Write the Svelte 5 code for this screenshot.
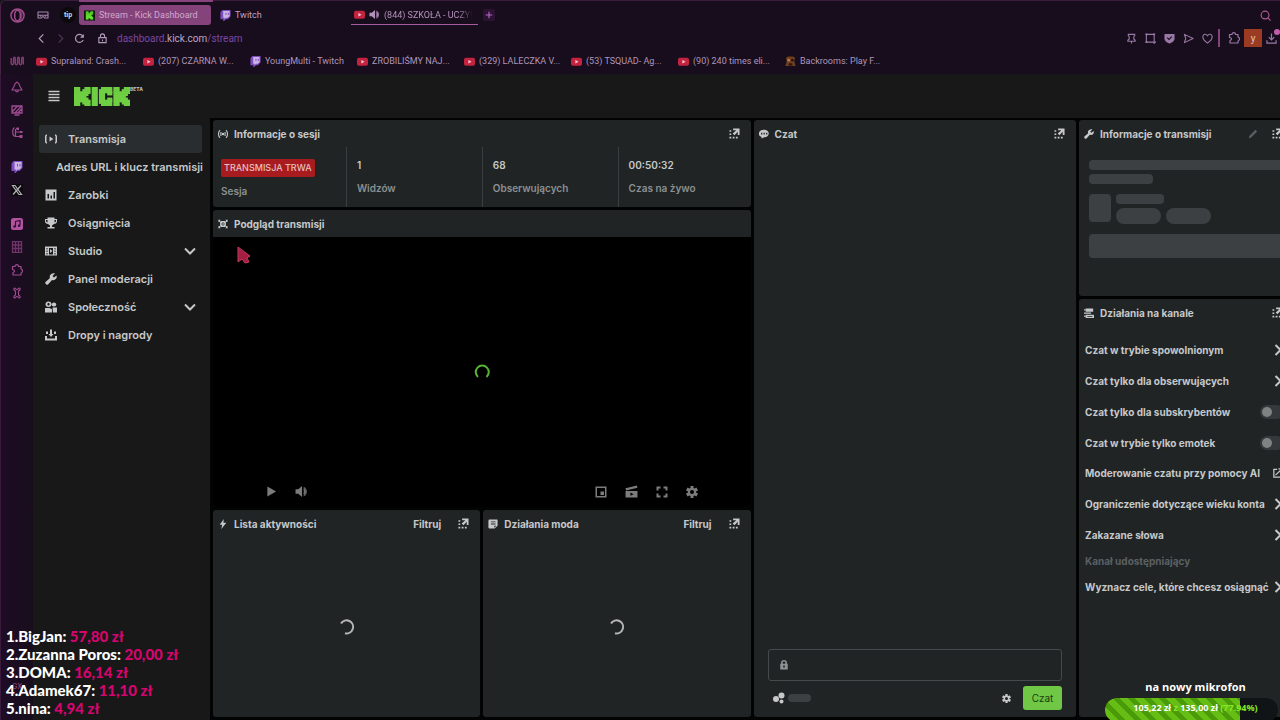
<script>
  const icons = {
    opera: '<g fill="none" stroke="currentColor" stroke-width="2.4"><circle cx="12" cy="12" r="10.5"/><ellipse cx="12" cy="12" rx="4.6" ry="8.6"/><path d="M12 3.4c9 1 9 16 0 17.200" opacity=".7"/></g>',
    workspace: '<path d="M2 6h20v12h-7l-1.500-2.500h-3L9 18H2zM3 12.500h18" fill="none" stroke="currentColor" stroke-width="2.200" stroke-linejoin="round"/><circle cx="7" cy="14" r="1.500"/><circle cx="17" cy="14" r="1.500"/>',
    back: '<path d="M16 3 7 12l9 9" fill="none" stroke="currentColor" stroke-width="2.600"/>',
    forward: '<path d="m8 3 9 9-9 9" fill="none" stroke="currentColor" stroke-width="2.600"/>',
    reload: '<path d="M20 15.500A8.800 8.800 0 1 1 19.500 7" fill="none" stroke="currentColor" stroke-width="2.600"/><path d="M21.500 2v8.500H13z"/>',
    padlock: '<path d="M4 10h16v11H4zM7.500 10V6.500a4.500 4.500 0 0 1 9 0V10M12 14v4" fill="none" stroke="currentColor" stroke-width="2.400"/>',
    youtube: '<rect x="0" y="4" width="24" height="17" rx="4" fill="#c3233f"/><path d="m9.500 8.500 7 4-7 4z" fill="#f0c9d4"/>',
    twitch: '<path d="M5 0h18v14l-6 6h-4l-4 4H7v-4H1V5z" fill="#7d4cc0"/><path d="M7 2h14v11l-4 4h-4l-3 3v-3H7z" fill="#c9b4e4"/><path d="M12 6h2v5h-2zM17 6h2v5h-2z" fill="#7d4cc0"/>',
    sound: '<path d="M1 8h5l7-6v20l-7-6H1z"/><path d="M16 3c8 3 8 15 0 18z" opacity=".75"/><path d="M16 8c3 2 3 6 0 8" fill="none" stroke="currentColor" stroke-width="2"/>',
    plus: '<path d="M12 2v20M2 12h20" fill="none" stroke="currentColor" stroke-width="3.500"/>',
    search: '<g fill="none" stroke="currentColor" stroke-width="2.500"><circle cx="11" cy="11" r="8.500"/><path d="m17 17 6 6"/></g>',
    pin: '<path d="M5 3h14v3l-2 2v5l3 3v2H4v-2l3-3V8L5 6zM12 18v5" fill="none" stroke="currentColor" stroke-width="2.400"/>',
    snapshot: '<path d="M3 3h17v17H3zM20 20h4M20 20v4" fill="none" stroke="currentColor" stroke-width="2.400"/><path d="M1 1h4v4H1zM18 1h4v4h-4zM1 18h4v4H1z"/>',
    shield: '<path d="M1 2h22v10c0 6-6 9-11 11C7 21 1 18 1 12z"/><path d="m7 10 4 4 6-6" fill="none" stroke="#180d1c" stroke-width="2.400"/>',
    send: '<path d="m3 3 19 9-19 9 3-9z" fill="none" stroke="currentColor" stroke-width="2.400" stroke-linejoin="round"/>',
    heart: '<path d="M12 22C2 15 1 11 2 7c1-5 7-6 10-1 3-5 9-4 10 1 1 4 0 8-10 15z" fill="none" stroke="currentColor" stroke-width="2.400"/>',
    puzzle: '<path d="M3 5h5c0-5 7-5 7 0h5v5c4 1 4 7 0 8v4H4v-5c4-1 4-6-1-6z" fill="none" stroke="currentColor" stroke-width="2.400" stroke-linejoin="round"/>',
    download: '<path d="M12 1v14M6 9l6 6 6-6M2 16v6h20v-6" fill="none" stroke="currentColor" stroke-width="2.600"/>',
    wave: '<path d="M2 7v9c0 3 4 3 4 0V8c0-3 3-3 3 0v8c0 3 4 3 4 0V8c0-3 3-3 3 0v8c0 3 4 3 4 0V8c0-3 3-3 3 0v10" fill="none" stroke="currentColor" stroke-width="2.600"/>',
    bell: '<path d="M12 2c4 2 5 5 6 9l4 7H2l4-7c1-4 2-7 6-9zM9 18c0 5 6 5 6 0" fill="none" stroke="currentColor" stroke-width="2.200" stroke-linejoin="round"/>',
    screen: '<path d="M2 4h20v14H2zM7 22h10M3 15 13 4M8 18 20 5M14 18l7-8" fill="none" stroke="currentColor" stroke-width="2.600"/>',
    branch: '<path d="M7 1C2 4 2 15 7 19M9 4v15h10M9 10h10M14 3h-4" fill="none" stroke="currentColor" stroke-width="2.400"/><path d="M11 1h5v5h-5zM18 8h5v4h-5zM17 16h6v6h-6z"/>',
    xlogo: '<rect width="24" height="24" fill="#0c0a0d"/><path d="M3 3h5l13 18h-5zM20 3 4 21" fill="none" stroke="currentColor" stroke-width="2.400"/>',
    music: '<rect width="24" height="24" rx="5"/><path d="M9 17V7l9-2v10" fill="none" stroke="#2a1230" stroke-width="2.400"/><circle cx="7" cy="17" r="2.500" fill="#2a1230"/><circle cx="16" cy="15.500" r="2.500" fill="#2a1230"/>',
    grid: '<path d="M3 1h18v22H3zM3 8h18M3 15h18M9 1v22M15 1v22" fill="none" stroke="currentColor" stroke-width="2.600"/>',
    bone: '<path d="M7 2c2 0 2 3 5 3s3-3 5-3 2 5-2 6v8c4 1 4 6 2 6s-2-3-5-3-3 3-5 3-2-5 2-6V8C5 7 5 2 7 2z" fill="none" stroke="currentColor" stroke-width="2.200"/>',
    menu: '<path d="M1 3h22M1 9h22M1 15h22M1 21h22" fill="none" stroke="currentColor" stroke-width="3"/>',
    live: '<path d="m9 7 8 5-8 5zM4 3v3H3v12h1v3H2l-2-3V6l2-3zM20 3v3h1v12h-1v3h2l2-3V6l-2-3z"/>',
    chart: '<path fill-rule="evenodd" d="M1 1h22v22H1zM5 10v9h3v-9zM11 13v6h3v-6zM17 6v13h3V6z"/>',
    trophy: '<path d="M5 1h14v3h5v5c0 3-3 5-6 5l-4 3v3h5v3H5v-3h5v-3l-4-3c-3 0-6-2-6-5V4h5zM2 6v3l3 2V6zM19 6v5l3-2V6z" fill-rule="evenodd"/>',
    studio: '<path fill-rule="evenodd" d="M0 3h24v18H0zM3 6v3h2V6zM3 11v3h2v-3zM3 16v3h2v-3zM19 6v3h2V6zM19 11v3h2v-3zM19 16v3h2v-3zM8 6v13h8V6zM10 8l5 4-5 4z"/>',
    wrench: '<path d="M20 1 15 6l3 3 5-4c2 5-2 11-9 9l-8 9c-3 2-7-2-5-5l9-8C7 5 14-1 20 1z"/>',
    people: '<path fill-rule="evenodd" d="M7 1c8 0 8 11 0 11S-1 1 7 1zM7 4c-3 0-3 5 0 5s3-5 0-5zM18 3c6 0 6 8 0 8s-6-8 0-8zM0 14h11v2h3v7H0zM15 13h9v10h-8z"/>',
    drops: '<path d="M0 14h4v5h16v-5h4v9H0zM10 1h4v9h3l-5 6-5-6h3zM2 5h4v5H2zM18 5h4v5h-4z"/>',
    down: '<path d="m2 7 10 10L22 7" fill="none" stroke="currentColor" stroke-width="4"/>',
    right: '<path d="m7 2 10 10L7 22" fill="none" stroke="currentColor" stroke-width="4"/>',
    signal: '<path d="M5 3C0 6 0 18 5 21M19 3c5 3 5 15 0 18M7 7v10M17 7v10" fill="none" stroke="currentColor" stroke-width="2.600"/><circle cx="12" cy="12" r="3"/>',
    popout: '<path d="M9 1h14v14h-4V8l-7 8-4-4 8-7H9zM1 5h4v3H1zM1 12h4v3H1zM1 19h4v4H1zM8 19h4v4H8zM15 19h4v4h-4z"/>',
    preview: '<path d="M1 2h5L4 7H1zM18 2h5v5h-3zM1 17h3l2 5H1zM20 17h3v5h-5z"/><rect x="5" y="5" width="14" height="14" rx="3"/><circle cx="12" cy="12" r="3" fill="none" stroke="#202425" stroke-width="1.600"/>',
    chat: '<path fill-rule="evenodd" d="M12 2c15 0 15 17 1 18l-7 3v-4C-5 15-1 2 12 2zM5 9v4h3V9zM11 9v4h3V9zM17 9v4h3V9z"/>',
    pencil: '<path d="M3 17 18 2l4 4L7 21l-5 1z"/>',
    actions: '<path d="M4 1h18v8H4zM0 11h17v3H0zM4 16h20v8H4z"/><path d="M0 3h4v3H0zM0 18h4v3H0z"/><path d="M8 19h12v2H8z" fill="#202425"/>',
    bolt: '<path d="M14 0 4 14h6L8 24l12-15h-7z"/>',
    note: '<path fill-rule="evenodd" d="M5 1h16c2 0 2 0 2 3v12l-7 7H5c-3 0-4-1-4-4V5c0-3 1-4 4-4zM7 6v2h11V6zM7 11v2h11v-2zM15 16v5l5-5z"/>',
    play: '<path d="M3 1 22 12 3 23z"/>',
    theater: '<path fill-rule="evenodd" d="M1 1h22v22H1zM4 4v16h16V4z"/><path d="M11 11h7v7h-7z"/>',
    clip: '<path d="m1 6 21-5 1 4L2 10zM1 11h22v12H1z"/><path d="m10 14 6 3-6 3z" fill="#000"/>',
    fullscreen: '<path d="M1 1h8v4H5v4H1zM15 1h8v8h-4V5h-4zM1 15h4v4h4v4H1zM19 15h4v8h-8v-4h4z"/>',
    gear: '<path fill-rule="evenodd" d="M9 0h6v4l2 1 4-2 3 6-4 2v2l4 2-3 6-4-2-2 1v4H9v-4l-2-1-4 2-3-6 4-2v-2L0 9l3-6 4 2 2-1zM12 8a4 4 0 1 0 0 8 4 4 0 0 0 0-8z"/>',
    lock: '<path fill-rule="evenodd" d="M3 9h2V6c0-8 14-8 14 0v3h2v14H3zM9 9h6V6c0-3-6-3-6 0zM10 13v5h4v-5z"/>',
    blobs: '<circle cx="6" cy="14" r="6"/><circle cx="17" cy="7" r="6"/><circle cx="17" cy="19" r="4"/>',
    external: '<path d="M10 3H2v19h19v-8M6 17 20 4M13 2h9v9" fill="none" stroke="currentColor" stroke-width="3"/>',
    bear: '<path d="M2 4l5-3h10l5 3-2 7 3 11H1l3-11z" fill="#70401f"/><circle cx="8" cy="9" r="3" fill="#c07a45"/><circle cx="16" cy="9" r="3" fill="#251612"/><path d="M8 16h8v5H8z" fill="#2a1714"/>'
  };
  const bookmarks = [
    ['youtube', 'Supraland: Crash...'],
    ['youtube', '(207) CZARNA W...'],
    ['twitch', 'YoungMulti - Twitch'],
    ['youtube', 'ZROBILIŚMY NAJ...'],
    ['youtube', '(329) LALECZKA V...'],
    ['youtube', '(53) TSQUAD- Ag...'],
    ['youtube', '(90) 240 times eli...'],
    ['bear', 'Backrooms: Play F...']
  ];
  const tools = ['pin', 'snapshot', 'shield', 'send', 'heart'];
  const railGroups = [['bell', 'screen', 'branch'], ['twitch', 'xlogo'], ['music', 'grid', 'puzzle', 'bone']];
  const nav = [
    { icon: 'live', label: 'Transmisja', active: true },
    { label: 'Adres URL i klucz transmisji' },
    { icon: 'chart', label: 'Zarobki' },
    { icon: 'trophy', label: 'Osiągnięcia' },
    { icon: 'studio', label: 'Studio', more: true },
    { icon: 'wrench', label: 'Panel moderacji' },
    { icon: 'people', label: 'Społeczność', more: true },
    { icon: 'drops', label: 'Dropy i nagrody' }
  ];
  const stats = [['1', 'Widzów'], ['68', 'Obserwujących'], ['00:50:32', 'Czas na żywo']];
  const actions = [
    ['Czat w trybie spowolnionym', 'right'],
    ['Czat tylko dla obserwujących', 'right'],
    ['Czat tylko dla subskrybentów', 'switch'],
    ['Czat w trybie tylko emotek', 'switch'],
    ['Moderowanie czatu przy pomocy AI', 'external'],
    ['Ograniczenie dotyczące wieku konta', 'right'],
    ['Zakazane słowa', 'right'],
    ['Kanał udostępniający', 'label'],
    ['Wyznacz cele, które chcesz osiągnąć', 'right']
  ];
  const donors = [['BigJan', '57,80'], ['Zuzanna Poros', '20,00'], ['DOMA', '16,14'], ['Adamek67', '11,10'], ['nina', '4,94']];
  const goal = 77.94;
  // Runs of filled cells in the blocky K: [row, start, length]
  const kCells = [[0, 0, 3], [0, 5, 3], [1, 0, 3], [1, 4, 4], [2, 0, 8], [3, 0, 7], [4, 0, 6], [5, 0, 7], [6, 0, 8], [7, 0, 3], [7, 4, 4], [8, 0, 3], [8, 5, 3]];
</script>

{#snippet icon(name, size = 12)}
  <svg class="icon" width={size} height={size} viewBox="0 0 24 24" fill="currentColor" aria-hidden="true">{@html icons[name]}</svg>
{/snippet}

{#snippet kShape(x)}
  {#each kCells as [row, col, len]}
    <rect x={x + col} y={row} width={len} height={row < 8 ? 1.3 : 1} />
  {/each}
{/snippet}

{#snippet head(ic, title, filter = false, pop = true)}
  <header class="head">
    {@render icon(ic, 10)}
    <h2>{title}</h2>
    {#if filter}<button class="filter">Filtruj</button>{/if}
    {#if ic === 'wrench'}<button class="dim" aria-label="Edytuj">{@render icon('pencil', 10)}</button>{/if}
    {#if pop}<button aria-label="Otwórz w nowym oknie">{@render icon('popout', 11)}</button>{/if}
  </header>
{/snippet}

<div class="window">
  <div class="chrome">
    <div class="tabs">
      <button class="opera" aria-label="Menu">{@render icon('opera', 15)}</button>
      <button class="space" aria-label="Obszar roboczy">{@render icon('workspace', 12)}</button>
      <button class="tip">tip</button>
      <button class="tab active">
        <svg class="icon" width="11" height="11" viewBox="-2 -1 12 11" aria-hidden="true">
          <rect x="-2" y="-1" width="12" height="11" fill="#10180f" />
          <g fill="#5fe02c">{@render kShape(0)}</g>
        </svg>
        <span>Stream - Kick Dashboard</span>
      </button>
      <button class="tab twitch">{@render icon('twitch', 11)}<span>Twitch</span></button>
      <button class="tab playing">{@render icon('youtube', 11)}{@render icon('sound', 11)}<span>(844) SZKOŁA - UCZY!</span></button>
      <button class="new" aria-label="Nowa karta">{@render icon('plus', 8)}</button>
      <button class="find" aria-label="Szukaj">{@render icon('search', 11)}</button>
    </div>
    <div class="address">
      <button aria-label="Wstecz">{@render icon('back', 11)}</button>
      <button class="off" aria-label="Dalej" disabled>{@render icon('forward', 11)}</button>
      <button aria-label="Odśwież">{@render icon('reload', 11)}</button>
      <span class="secure">{@render icon('padlock', 11)}</span>
      <a class="url" href="#stream">dashboard<b>.kick.com</b>/stream</a>
      <div class="tools">
        {#each tools as tool}
          <button aria-label={tool}>{@render icon(tool, 11)}</button>
        {/each}
      </div>
      <i class="bar"></i>
      <button class="ext" aria-label="Rozszerzenia">{@render icon('puzzle', 12)}</button>
      <button class="profile">y</button>
      <button class="downloads" aria-label="Pobrane">{@render icon('download', 11)}</button>
    </div>
    <nav class="bookmarks" aria-label="Zakładki">
      <span class="wave">{@render icon('wave', 14)}</span>
      {#each bookmarks as [ic, text]}
        <a href="#bookmark">{@render icon(ic, 11)}<span>{text}</span></a>
      {/each}
    </nav>
  </div>

  <div class="body">
    <aside class="rail">
      {#each railGroups as group}
        <div class="group">
          {#each group as name}
            <button class={name} aria-label={name}>{@render icon(name, 12)}</button>
          {/each}
        </div>
      {/each}
      <span class="gx">GX</span>
    </aside>

    <div class="site">
      <div class="top">
        <button aria-label="Menu boczne">{@render icon('menu', 12)}</button>
        <a class="brand" href="#kick" aria-label="Kick">
          <svg width="56" height="19" viewBox="0 0 27 9" preserveAspectRatio="none" fill="#6fcf42" aria-hidden="true">
            {@render kShape(0)}
            <rect x="8.500" width="3" height="9" />
            <rect x="13" width="5.500" height="3" />
            <rect x="12" y="1" width="3" height="7" />
            <rect x="13" y="6" width="5.500" height="3" />
            <rect x="16" y="2" width="2.500" height="2" />
            <rect x="16" y="5" width="2.500" height="2" />
            {@render kShape(19)}
          </svg>
          <sup>BETA</sup>
        </a>
      </div>

      <div class="columns">
        <nav class="side" aria-label="Panel">
          {#each nav as item}
            <a href="#nav" class:active={item.active} class:sub={!item.icon}>
              {#if item.icon}{@render icon(item.icon, 12)}{/if}
              <span>{item.label}</span>
              {#if item.more}<em>{@render icon('down', 12)}</em>{/if}
            </a>
          {/each}
        </nav>

        <main>
          <div class="left">
            <section class="panel">
              {@render head('signal', 'Informacje o sesji')}
              <dl class="stats">
                <div class="session"><dd><mark>TRANSMISJA TRWA</mark></dd><dt>Sesja</dt></div>
                {#each stats as [value, label]}
                  <div><dd>{value}</dd><dt>{label}</dt></div>
                {/each}
              </dl>
            </section>
            <section class="panel player">
              {@render head('preview', 'Podgląd transmisji', false, false)}
              <div class="video">
                <svg class="spinner green" width="16" height="16" viewBox="0 0 16 16" fill="none" stroke="currentColor" stroke-width="2" aria-hidden="true"><path d="M4 13A6.500 6.500 0 1 1 12.500 13" /></svg>
                <div class="controls">
                  <button aria-label="Odtwórz">{@render icon('play', 11)}</button>
                  <button aria-label="Głośność">{@render icon('sound', 13)}</button>
                  <span></span>
                  <button aria-label="Tryb kinowy">{@render icon('theater', 12)}</button>
                  <button aria-label="Klip">{@render icon('clip', 13)}</button>
                  <button aria-label="Pełny ekran">{@render icon('fullscreen', 12)}</button>
                  <button aria-label="Ustawienia">{@render icon('gear', 12)}</button>
                </div>
              </div>
            </section>
            <div class="pair">
              {#each [['bolt', 'Lista aktywności'], ['note', 'Działania moda']] as [ic, title]}
                <section class="panel">
                  {@render head(ic, title, true)}
                  <div class="loading">
                    <svg class="spinner" width="16" height="16" viewBox="0 0 16 16" fill="none" stroke="currentColor" stroke-width="2" aria-hidden="true"><path d="M2 4.500A6.500 6.500 0 1 1 6 14.200" /></svg>
                  </div>
                </section>
              {/each}
            </div>
          </div>

          <section class="panel chat">
            {@render head('chat', 'Czat')}
            <form class="compose" onsubmit={(e) => e.preventDefault()}>
              <label class="field">{@render icon('lock', 10)}<input type="text" aria-label="Wiadomość" /></label>
              <div class="sendrow">
                {@render icon('blobs', 12)}
                <i class="skeleton points"></i>
                <button type="button" class="settings" aria-label="Ustawienia czatu">{@render icon('gear', 9)}</button>
                <button class="submit">Czat</button>
              </div>
            </form>
          </section>

          <div class="right">
            <section class="panel info">
              {@render head('wrench', 'Informacje o transmisji')}
              <div class="skeletons">
                <i class="skeleton"></i>
                <i class="skeleton short"></i>
                <div class="category">
                  <i class="skeleton cover"></i>
                  <div>
                    <i class="skeleton name"></i>
                    <div class="pills"><i class="skeleton"></i><i class="skeleton"></i></div>
                  </div>
                </div>
                <i class="skeleton block"></i>
              </div>
            </section>
            <section class="panel channel">
              {@render head('actions', 'Działania na kanale')}
              <ul>
                {#each actions as [text, kind]}
                  <li class={kind}>
                    {#if kind === 'switch'}
                      <label>{text}<input type="checkbox" role="switch" /></label>
                    {:else if kind === 'label'}
                      <span>{text}</span>
                    {:else}
                      <button>{text}{@render icon(kind, kind === 'right' ? 12 : 10)}</button>
                    {/if}
                  </li>
                {/each}
              </ul>
            </section>
          </div>
        </main>
      </div>
    </div>
  </div>

  <svg class="pointer" width="14" height="18" viewBox="0 0 14 18" aria-hidden="true"><path d="M1 1v15l4-3 3 4 4-1-2-4 3-2z" fill="#a51f43" stroke="#c03a5e" stroke-width="1" /></svg>

  <ol class="donors">
    {#each donors as [name, sum], i}
      <li>{i + 1}.<span>{name}:</span> <strong>{sum} zł</strong></li>
    {/each}
  </ol>

  <div class="goal">
    <p>na nowy mikrofon</p>
    <div class="track">
      <i style="width: {goal}%"></i>
      <span>105,22 zł <u>z</u> 135,00 zł <u>({goal}%)</u></span>
    </div>
  </div>
</div>

<style>
  :global(body) { background: #181818; }
  * { box-sizing: border-box; }
  .icon { display: block; flex: none; }
  button { display: flex; align-items: center; justify-content: center; padding: 0; border: 0; background: none; color: inherit; font: inherit; }
  a { color: inherit; text-decoration: none; }
  h2, p, ul, ol, dl, dd, dt { margin: 0; padding: 0; list-style: none; font: inherit; }
  i { display: block; }

  .window { position: relative; display: flex; flex-direction: column; height: 100vh; overflow: hidden; background: #181818; color: #c6c8c9; font-family: Inter, "Liberation Sans", sans-serif; }

  .chrome { position: relative; flex: none; padding: 3px 0 2px; border-top: 1px solid #3c1c3d; border-left: 1px solid #4a2149; border-top-left-radius: 6px; background: #180d1c; color: #a385ac; font-family: Roboto, sans-serif; font-size: 9px; }
  .chrome::before { content: ""; position: absolute; top: -1px; left: 78px; width: 134px; height: 2px; background: #87447c; }
  .tabs { display: flex; align-items: center; height: 22px; padding-left: 9px; }
  .tabs .opera { color: #a34c8d; }
  .tabs .space { margin: 0 11px 0 12px; }
  .tip { width: 16px; height: 16px; margin-right: 5px; border-radius: 8px; background: #0b090c; color: #d8d8d8; font-size: 7px; font-weight: 700; }
  .tab { gap: 4px; height: 20px; white-space: nowrap; overflow: hidden; }
  .tab.active { justify-content: flex-start; width: 132px; margin-left: -2px; padding-left: 5px; border-radius: 3px; background: #85437b; color: #d0a9d0; }
  .tab.twitch { width: 131px; margin: 0 9px 0 0; padding-left: 9px; justify-content: flex-start; color: #c0a1c8; }
  .tab.playing { justify-content: flex-start; width: 127px; padding-left: 3px; border-bottom: 1px solid #a75ba0; color: #b293bb; }
  .tab.playing span { mask-image: linear-gradient(90deg, #000 82%, transparent); }
  .new { width: 12px; height: 12px; margin-left: 5px; border-radius: 2px; background: #2c1334; color: #b069c0; }
  .find { margin: 0 9px 0 auto; color: #ad5b94; }
  .address { display: flex; align-items: center; height: 24px; padding-left: 35px; gap: 8px; color: #b29abb; }
  .address .off { color: #4d3755; }
  .secure { margin-left: 4px; }
  .url { margin-left: 1px; color: #7d48a0; font-size: 10px; }
  .url b { color: #bca5c5; font-weight: 400; }
  .tools { display: flex; gap: 8px; margin-left: auto; color: #9879a5; }
  .bar { width: 2px; height: 18px; margin-left: -3px; background: #81437a; }
  .ext { color: #9879a5; }
  .profile { width: 18px; height: 18px; margin-left: -4px; background: #9b3c22; color: #e7c3ba; font-size: 10px; }
  .downloads { position: relative; margin: 0 3px 0 -4px; color: #9879a5; }
  .downloads::after { content: ""; position: absolute; top: -4px; right: -3px; width: 6px; height: 6px; border-radius: 3px; background: #c35cab; }
  .bookmarks { display: flex; align-items: center; height: 22px; padding-left: 9px; color: #af96b8; }
  .wave { width: 26px; color: #7e3c70; }
  .bookmarks a { display: flex; align-items: center; gap: 4px; width: 107px; white-space: nowrap; }

  .body { display: flex; flex: 1; min-height: 0; }
  .rail { display: flex; flex: none; flex-direction: column; gap: 11px; width: 33px; padding-top: 1px; border-left: 1px solid #3a1a3d; background: linear-gradient(90deg, #1e0c25, #180e1c); color: #a04c92; }
  .group button { width: 31px; height: 23px; }
  .group .xlogo { color: #b5b0b8; }
  .group .music { color: #b552a0; }
  .group .grid { color: #6f3269; }
  .gx { margin: auto 0 27px 11px; color: #a04c92; font-size: 7px; line-height: 12px; }

  .site { display: flex; flex: 1; flex-direction: column; min-width: 0; }
  .top { display: flex; flex: none; align-items: center; gap: 14px; height: 44px; padding-left: 15px; }
  .brand { display: flex; align-items: flex-start; }
  .brand sup { font-size: 5px; font-weight: 700; line-height: 5px; }
  .columns { display: flex; flex: 1; min-height: 0; }
  .side { flex: none; width: 177px; padding: 7px 8px 0 6px; font-size: 11px; font-weight: 600; }
  .side a { display: flex; align-items: center; gap: 11px; height: 28px; padding: 0 6px; border-radius: 3px; white-space: nowrap; }
  .side a.active { background: #2a2d30; }
  .side a.sub { padding-left: 17px; }
  .side em { margin-left: auto; }

  main { display: grid; flex: none; grid-template-columns: minmax(0, 5fr) minmax(0, 3fr) minmax(0, 2fr); gap: 3px; width: calc(100% - 160px); padding: 2px 3px 3px; background: #020303; font-size: 10px; font-weight: 600; }
  .left, .right { display: flex; flex-direction: column; gap: 3px; min-height: 0; }
  .panel { display: flex; flex-direction: column; border-radius: 3px; background: #202425; overflow: hidden; }
  .head { display: flex; flex: none; align-items: center; height: 27px; padding: 0 11px 0 5px; font-weight: 700; }
  .head h2 { margin: 0 auto 0 6px; }
  .filter { margin-right: 17px; }
  .dim { margin-right: 14px; color: #5a5e60; }
  .stats { display: grid; grid-template-columns: 133fr 136fr 136fr 133fr; }
  .stats div { height: 60px; padding: 9px 10px; border-left: 1px solid #3b3f41; }
  .stats .session { padding: 11px 8px; border: 0; }
  .stats dd { line-height: 18px; margin-bottom: 5px; }
  .stats dt { color: #8b9092; line-height: 18px; }
  mark { display: inline-block; padding: 0 3px; border-radius: 2px; background: #a81c1f; color: #e3bfc0; font-size: 9px; font-weight: 500; }
  .player { flex: 1; min-height: 0; }
  .video { position: relative; display: grid; flex: 1; place-items: center; background: #000; }
  .spinner { color: #b3b5b6; }
  .spinner.green { color: #58b335; }
  .controls { position: absolute; inset: auto 0 9px; display: flex; align-items: center; gap: 18px; padding: 0 53px; color: #7c7c7c; }
  .controls span { flex: 1; }
  .pair { display: grid; flex: none; grid-template-columns: 1fr 1fr; gap: 3px; height: 207px; }
  .loading { display: grid; flex: 1; place-items: center; }
  .compose { margin-top: auto; padding: 0 14px 7px; }
  .field { display: flex; align-items: center; height: 32px; padding: 0 10px; border: 1px solid #454a4c; border-radius: 3px; color: #909395; }
  .field input { flex: 1; min-width: 0; border: 0; outline: 0; background: none; color: inherit; font: inherit; }
  .sendrow { display: flex; align-items: center; height: 24px; margin-top: 5px; padding-left: 5px; }
  .settings { margin: 0 12px 0 auto; }
  .submit { width: 39px; height: 24px; border-radius: 3px; background: #6fc745; color: #1c3b13; font-weight: 400; }
  .skeleton { height: 10px; border-radius: 4px; background: #3c4043; }
  .points { width: 23px; height: 8px; margin-left: 3px; }

  .info { height: 176px; }
  .skeletons { display: flex; flex-direction: column; gap: 4px; padding: 13px 10px; }
  .short { width: 64px; }
  .category { display: flex; gap: 5px; margin: 6px 0; }
  .cover { width: 22px; height: 28px; }
  .name { width: 48px; margin-bottom: 4px; }
  .pills { display: flex; gap: 5px; }
  .pills .skeleton { width: 45px; height: 16px; border-radius: 8px; }
  .block { height: 24px; }
  .channel { flex: 1; }
  .channel ul { padding: 8px 10px 0 6px; white-space: nowrap; font-weight: 700; }
  .channel li > * { display: flex; align-items: center; justify-content: space-between; width: 100%; height: 31px; }
  .channel .external > * { height: 30px; padding-right: 1px; }
  .channel .label > * { height: 21px; color: #5b6063; }
  .channel input { position: relative; width: 24px; height: 14px; margin: 0; border-radius: 7px; appearance: none; background: #35393b; }
  .channel input::before { content: ""; position: absolute; top: 2px; left: 2px; width: 10px; height: 10px; border-radius: 5px; background: #808384; }

  .pointer { position: absolute; left: 237px; top: 246px; }
  .donors { position: absolute; left: 6px; bottom: 3px; color: #fff; font: 900 15px/18px Lato, sans-serif; }
  .donors li { height: 18px; }
  .donors strong { color: #d4056f; font-weight: 900; }
  .goal { position: absolute; right: 2px; bottom: -2px; width: 173px; color: #fff; text-align: center; font: 700 11px/16px "Open Sans", sans-serif; }
  .goal p { padding-left: 8px; margin-bottom: 3px; }
  .track { position: relative; height: 24px; border-radius: 12px; background: #111416; overflow: hidden; }
  .track i { height: 24px; background: repeating-linear-gradient(45deg, #4b9a09 0 5px, #66bd13 5px 11px); }
  .track span { position: absolute; inset: 0 0 0 8px; font-size: 9px; line-height: 20px; white-space: nowrap; }
  .track u { color: #86ea28; text-decoration: none; }
</style>
